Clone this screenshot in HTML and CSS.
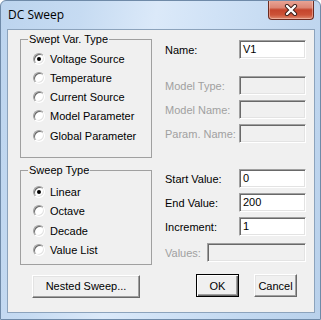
FILE: index.html
```html
<!DOCTYPE html>
<html>
<head>
<meta charset="UTF-8">
<title>DC Sweep</title>
<link rel="stylesheet" href="styles.css">
</head>
<body>
<div class="window">
	<div class="titlebar">
		<span class="title">DC Sweep</span>
		<div class="close">
			<svg width="14" height="12" viewBox="0 0 14 12">
				<path d="M3 2 L11 10 M11 2 L3 10" stroke="#3a1d18" stroke-width="4.2" stroke-linecap="round"/>
				<path d="M3 2 L11 10 M11 2 L3 10" stroke="#ffffff" stroke-width="2.4" stroke-linecap="round"/>
			</svg>
		</div>
	</div>
	<div class="client">
		<div class="leftcol">
			<fieldset class="group group-var">
				<legend>Swept Var. Type</legend>
				<div class="opt"><span class="radio on"></span>Voltage Source</div>
				<div class="opt"><span class="radio"></span>Temperature</div>
				<div class="opt"><span class="radio"></span>Current Source</div>
				<div class="opt"><span class="radio"></span>Model Parameter</div>
				<div class="opt"><span class="radio"></span>Global Parameter</div>
			</fieldset>
			<fieldset class="group group-sweep">
				<legend>Sweep Type</legend>
				<div class="opt"><span class="radio on"></span>Linear</div>
				<div class="opt"><span class="radio"></span>Octave</div>
				<div class="opt"><span class="radio"></span>Decade</div>
				<div class="opt"><span class="radio"></span>Value List</div>
			</fieldset>
			<div class="btn nested">Nested Sweep...</div>
		</div>
		<div class="rightcol">
			<div class="row r-name"><span class="lbl">Name:</span><span class="field">V1</span></div>
			<div class="row r-mtype"><span class="lbl off">Model Type:</span><span class="field off"></span></div>
			<div class="row r-gap"><span class="lbl off">Model Name:</span><span class="field off"></span></div>
			<div class="row r-gap"><span class="lbl off">Param. Name:</span><span class="field off"></span></div>
			<div class="row r-start"><span class="lbl">Start Value:</span><span class="field">0</span></div>
			<div class="row r-gap"><span class="lbl">End Value:</span><span class="field">200</span></div>
			<div class="row r-gap"><span class="lbl">Increment:</span><span class="field">1</span></div>
			<div class="row r-values"><span class="lbl off short">Values:</span><span class="field off wide"></span></div>
			<div class="buttons">
				<div class="btn ok">OK</div>
				<div class="btn cancel">Cancel</div>
			</div>
		</div>
	</div>
</div>
</body>
</html>
```
FILE: styles.css
```css
body
{
	margin: 0;
	font-family: "Liberation Sans", Arial, sans-serif;
	font-size: 11px;
	color: #000;
}

.window
{
	width: 321px;
	height: 320px;
	box-sizing: border-box;
	border: 1px solid #6f8aa8;
	border-radius: 6px 6px 0 0;
	background: linear-gradient(100deg, #bcd4ee 0%, #c6dbf2 22%, #dbe9f9 42%, #d0e2f6 58%, #c2d8f0 80%, #b9d1eb 100%);
	overflow: hidden;
}

/* title bar */
.titlebar
{
	height: 28px;
	display: flex;
	align-items: flex-start;
	justify-content: space-between;
	padding-left: 7px;
}

.title
{
	font-family: "Open Sans", "Noto Sans", sans-serif;
	font-size: 12px;
	line-height: 28px;
}

.close
{
	width: 46px;
	height: 20px;
	box-sizing: border-box;
	margin-top: -1px;
	margin-right: 6px;
	border: 1px solid #6b2b20;
	border-top: none;
	border-radius: 0 0 4px 4px;
	background: linear-gradient(#eaa899 0%, #dc8674 40%, #c5452c 52%, #cc5237 78%, #df8a6f 100%);
	box-shadow: inset 0 0 0 1px rgba(255, 220, 210, 0.45);
	display: flex;
	align-items: center;
	justify-content: center;
	padding-top: 1px;
}

/* client area */
.client
{
	margin-left: 6px;
	width: 308px;
	height: 284px;
	box-sizing: border-box;
	border: 1px solid #8ca3bc;
	background: #f0f0f0;
	display: flex;
}

.leftcol
{
	width: 157px;
	flex: none;
	box-sizing: border-box;
	padding-left: 12px;
	display: flex;
	flex-direction: column;
	align-items: flex-start;
}

.group
{
	margin: 0;
	width: 132px;
	box-sizing: border-box;
	border: 1px solid #a0a0a0;
	padding: 3px 0 12px 12px;
}

.group legend
{
	padding: 0 1px;
	margin-left: -5px;
	line-height: 13px;
}

.group-var
{
	margin-top: 3px;
}

.group-var .opt
{
	height: 19.25px;
}

.group-sweep
{
	margin-top: 6px;
	padding-top: 5px;
	padding-bottom: 4px;
}

.group-sweep .opt
{
	height: 19.4px;
}

.opt
{
	display: flex;
	align-items: center;
	gap: 5px;
	height: 19px;
	white-space: nowrap;
}

.radio
{
	width: 12px;
	height: 12px;
	box-sizing: border-box;
	border-radius: 50%;
	background: #fff;
	border: 1px solid;
	border-color: #a0a0a0 #fff #fff #a0a0a0;
	box-shadow: inset 1px 1px 0 #696969, inset -1px -1px 0 #e3e3e3;
	display: flex;
	align-items: center;
	justify-content: center;
}

.radio.on::after
{
	content: "";
	width: 4px;
	height: 4px;
	border-radius: 50%;
	background: #000;
}

/* buttons */
.btn
{
	height: 23px;
	box-sizing: border-box;
	background: #f0f0f0;
	border: 1px solid;
	border-color: #fff #696969 #696969 #fff;
	box-shadow: inset -1px -1px 0 #a0a0a0, inset 1px 1px 0 #e3e3e3;
	display: flex;
	align-items: center;
	justify-content: center;
}

.nested
{
	width: 108px;
	margin-left: 12px;
	margin-top: 10px;
}

.ok
{
	width: 43px;
	border: 1px solid #000;
	box-shadow: inset 1px 1px 0 #fff, inset -1px -1px 0 #696969, inset -2px -2px 0 #a0a0a0;
}

.cancel
{
	width: 43px;
}

/* right column */
.rightcol
{
	flex: 1;
	display: flex;
	flex-direction: column;
}

.row
{
	display: flex;
	align-items: center;
	height: 19px;
	margin-top: 5px;
}

.r-name
{
	margin-top: 10px;
}

.r-mtype
{
	margin-top: 17px;
}

.r-start
{
	margin-top: 26px;
}

.r-values
{
	margin-top: 7px;
}

.lbl
{
	width: 74px;
	flex: none;
	white-space: nowrap;
}

.lbl.short
{
	width: 42px;
}

.lbl.off
{
	color: #a0a0a0;
}

.field
{
	width: 67px;
	height: 19px;
	box-sizing: border-box;
	background: #fff;
	border: 1px solid;
	border-color: #a0a0a0 #fff #fff #a0a0a0;
	box-shadow: inset 1px 1px 0 #696969, inset -1px -1px 0 #e3e3e3;
	padding-left: 3px;
	line-height: 17px;
}

.field.off
{
	background: #f0f0f0;
}

.field.wide
{
	width: 99px;
}

.buttons
{
	display: flex;
	gap: 15px;
	margin-top: 12px;
	padding-left: 31px;
}
```
